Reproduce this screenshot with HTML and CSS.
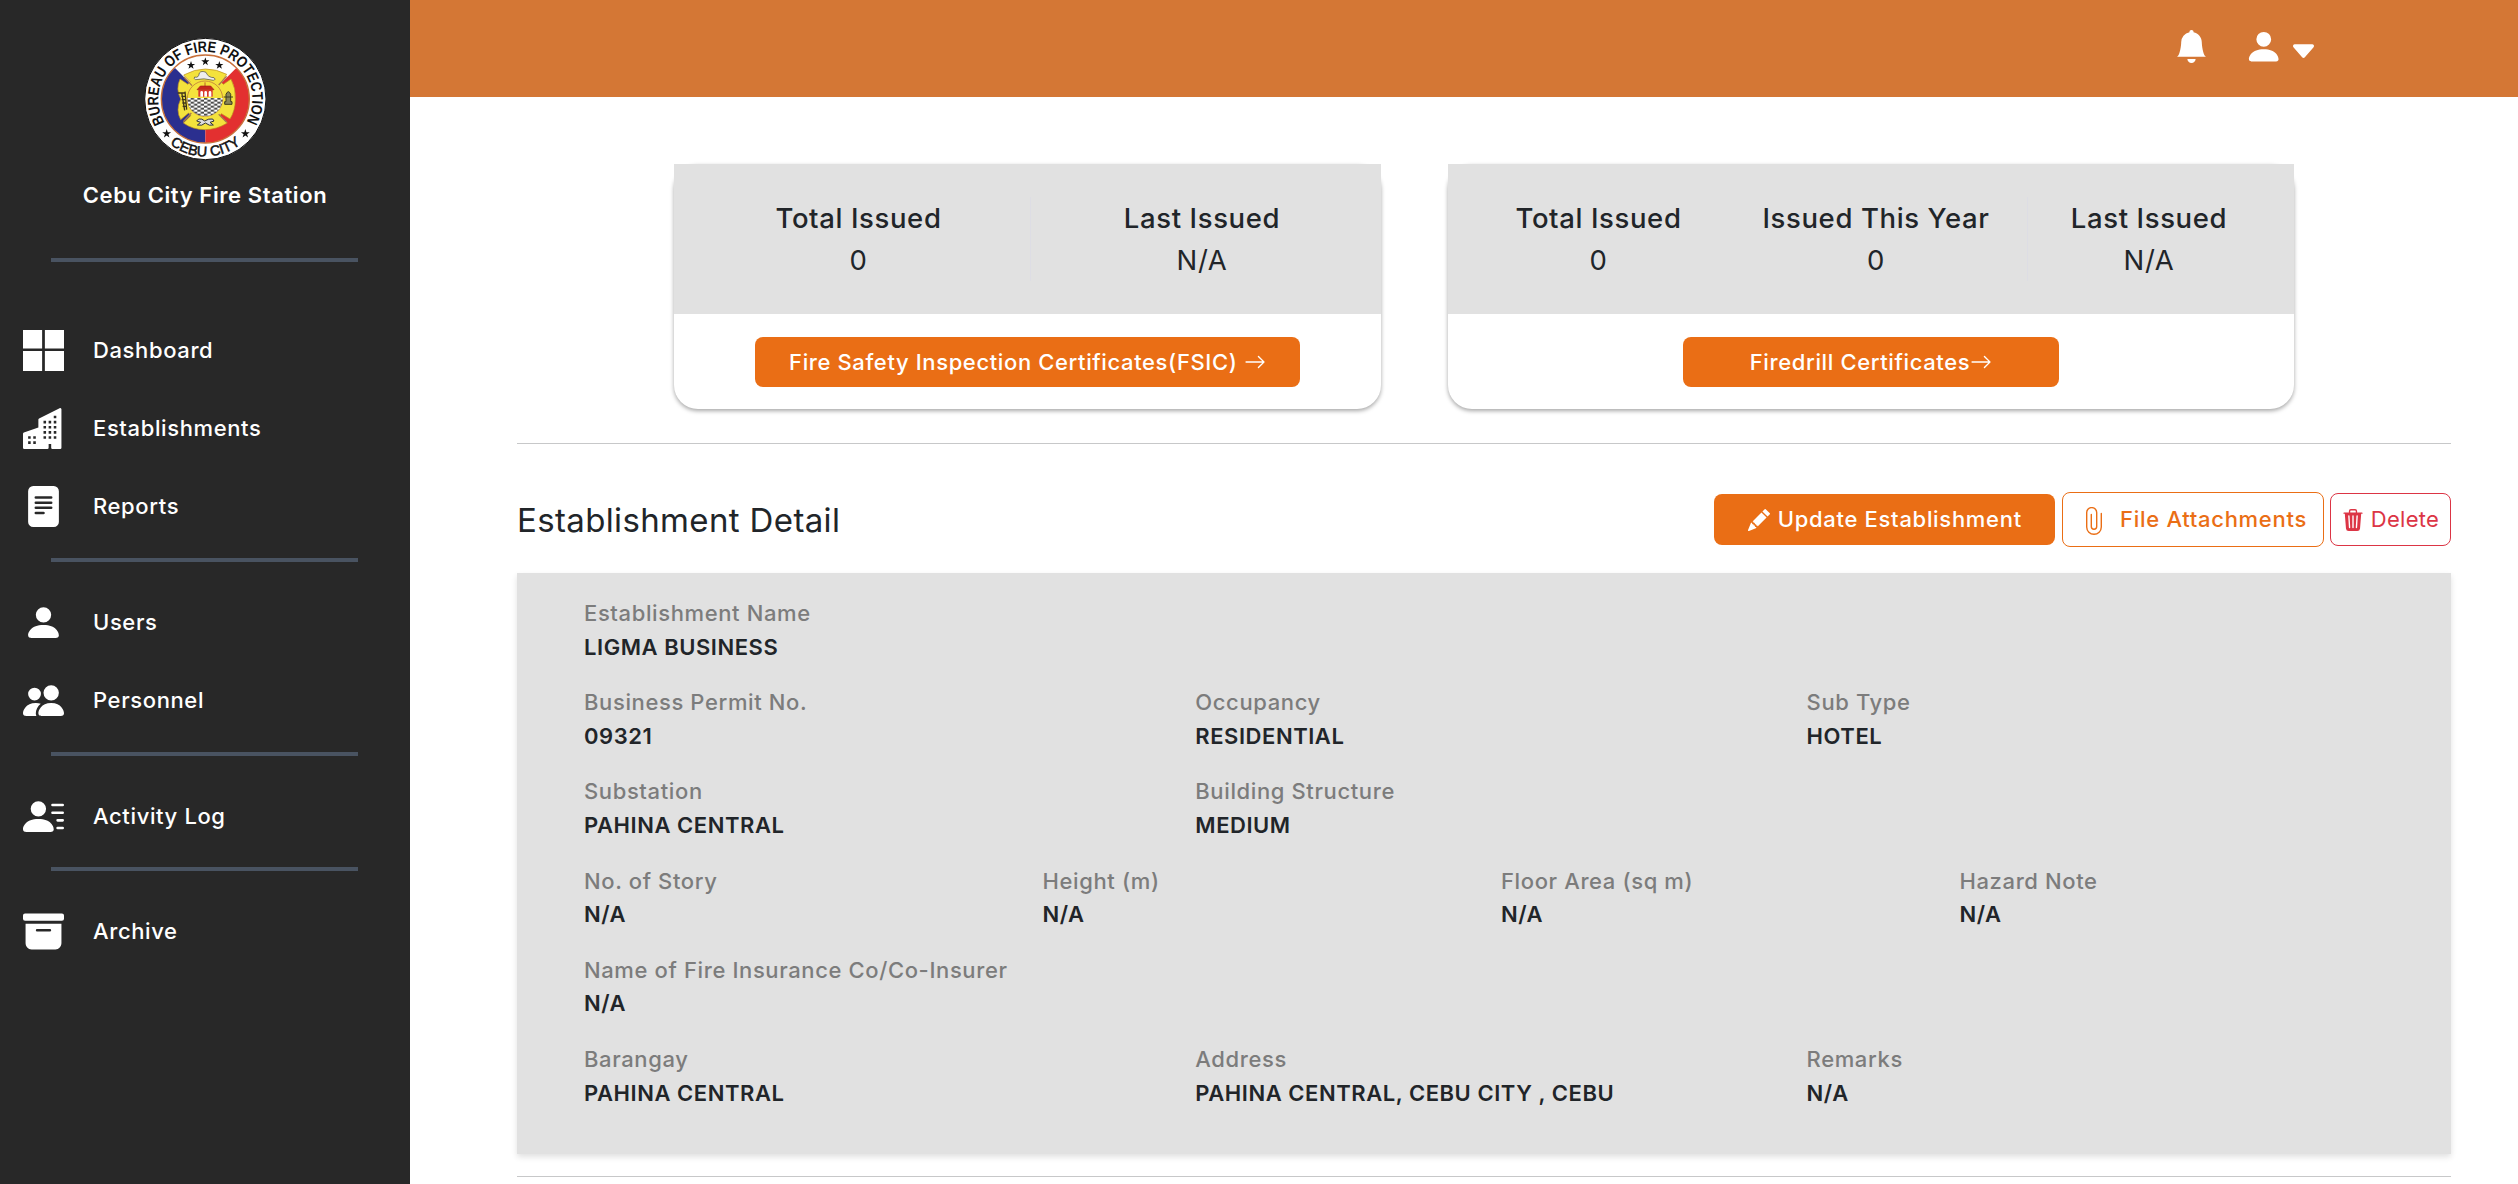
FILE: index.html
```html
<!DOCTYPE html>
<html lang="en">
<head>
<meta charset="utf-8">
<title>Establishment Detail</title>
<link rel="stylesheet" href="styles.css">
</head>
<body>
<svg class="defs" aria-hidden="true">
  <symbol id="i-grid" viewBox="0 0 16 16"><path d="M7.462 0H0v7.19h7.462zM16 0H8.538v7.19H16zM7.462 8.211H0V16h7.462zm8.538 0H8.538V16H16z"/></symbol>
  <symbol id="i-buildings" viewBox="0 0 16 16"><path d="M15 .5a.5.5 0 0 0-.724-.447l-8 4A.5.5 0 0 0 6 4.5v3.14L.342 9.526A.5.5 0 0 0 0 10v5.5a.5.5 0 0 0 .5.5h9a.5.5 0 0 0 .5-.5V14h1v1.5a.5.5 0 0 0 .5.5h3a.5.5 0 0 0 .5-.5zM2 11h1v1H2zm2 0h1v1H4zm-1 2v1H2v-1zm1 0h1v1H4zm9-10v1h-1V3zM8 5h1v1H8zm1 2v1H8V7zM8 9h1v1H8zm2 0h1v1h-1zm-1 2v1H8v-1zm1 0h1v1h-1zm3-2v1h-1V9zm-1 2h1v1h-1zm-2-4h1v1h-1zm3 0v1h-1V7zm-2-2v1h-1V5zm1 0h1v1h-1z"/></symbol>
  <symbol id="i-file" viewBox="0 0 16 16"><path d="M12 0H4a2 2 0 0 0-2 2v12a2 2 0 0 0 2 2h8a2 2 0 0 0 2-2V2a2 2 0 0 0-2-2M5 4h6a.5.5 0 0 1 0 1H5a.5.5 0 0 1 0-1m-.5 2.5A.5.5 0 0 1 5 6h6a.5.5 0 0 1 0 1H5a.5.5 0 0 1-.5-.5M5 8h6a.5.5 0 0 1 0 1H5a.5.5 0 0 1 0-1m0 2h3a.5.5 0 0 1 0 1H5a.5.5 0 0 1 0-1"/></symbol>
  <symbol id="i-person" viewBox="0 0 16 16"><path d="M3 14s-1 0-1-1 1-4 6-4 6 3 6 4-1 1-1 1zm5-6a3 3 0 1 0 0-6 3 3 0 0 0 0 6"/></symbol>
  <symbol id="i-people" viewBox="0 0 16 16"><path d="M7 14s-1 0-1-1 1-4 5-4 5 3 5 4-1 1-1 1zm4-6a3 3 0 1 0 0-6 3 3 0 0 0 0 6m-5.784 6A2.24 2.24 0 0 1 5 13c0-1.355.68-2.75 1.936-3.72A6.3 6.3 0 0 0 5 9c-4 0-5 3-5 4s1 1 1 1zM4.5 8a2.5 2.5 0 1 0 0-5 2.5 2.5 0 0 0 0 5"/></symbol>
  <symbol id="i-lines" viewBox="0 0 16 16"><path d="M6 8a3 3 0 1 0 0-6 3 3 0 0 0 0 6m-5 6s-1 0-1-1 1-4 6-4 6 3 6 4-1 1-1 1zM11 3.5a.5.5 0 0 1 .5-.5h4a.5.5 0 0 1 0 1h-4a.5.5 0 0 1-.5-.5m.5 2.5a.5.5 0 0 0 0 1h4a.5.5 0 0 0 0-1zm2 3a.5.5 0 0 0 0 1h2a.5.5 0 0 0 0-1zm0 3a.5.5 0 0 0 0 1h2a.5.5 0 0 0 0-1z"/></symbol>
  <symbol id="i-archive" viewBox="0 0 16 16"><path d="M12.643 15C13.979 15 15 13.845 15 12.5V5H1v7.5C1 13.845 2.021 15 3.357 15zM5.5 7h5a.5.5 0 0 1 0 1h-5a.5.5 0 0 1 0-1M.8 1a.8.8 0 0 0-.8.8V3a.8.8 0 0 0 .8.8h14.4A.8.8 0 0 0 16 3V1.8a.8.8 0 0 0-.8-.8z"/></symbol>
  <symbol id="i-bell" viewBox="0 0 16 16"><path d="M8 16a2 2 0 0 0 2-2H6a2 2 0 0 0 2 2m.995-14.901a1 1 0 1 0-1.99 0A5 5 0 0 0 3 6c0 1.098-.5 6-2 7h14c-1.5-1-2-5.902-2-7 0-2.42-1.72-4.44-4.005-4.901"/></symbol>
  <symbol id="i-caret" viewBox="0 0 16 16"><path d="M7.247 11.14 2.451 5.658C1.885 5.013 2.345 4 3.204 4h9.592a1 1 0 0 1 .753 1.659l-4.796 5.48a1 1 0 0 1-1.506 0z"/></symbol>
  <symbol id="i-arrow" viewBox="0 0 16 16"><path d="M1 8a.5.5 0 0 1 .5-.5h11.793l-3.147-3.146a.5.5 0 0 1 .708-.708l4 4a.5.5 0 0 1 0 .708l-4 4a.5.5 0 0 1-.708-.708L13.293 8.5H1.5A.5.5 0 0 1 1 8"/></symbol>
  <symbol id="i-pencil" viewBox="0 0 16 16"><path d="M12.854.146a.5.5 0 0 0-.707 0L10.5 1.793 14.207 5.5l1.647-1.646a.5.5 0 0 0 0-.708zm.646 6.061L9.793 2.5 3.293 9H3.5a.5.5 0 0 1 .5.5v.5h.5a.5.5 0 0 1 .5.5v.5h.5a.5.5 0 0 1 .5.5v.5h.5a.5.5 0 0 1 .5.5v.207zm-7.468 7.468A.5.5 0 0 1 6 13.5V13h-.5a.5.5 0 0 1-.5-.5V12h-.5a.5.5 0 0 1-.5-.5V11h-.5a.5.5 0 0 1-.5-.5V10h-.5a.5.5 0 0 1-.175-.032l-.179.178a.5.5 0 0 0-.11.168l-2 5a.5.5 0 0 0 .65.65l5-2a.5.5 0 0 0 .168-.11z"/></symbol>
  <symbol id="i-trash" viewBox="0 0 16 16"><path d="M11 1.5v1h3.5a.5.5 0 0 1 0 1h-.538l-.853 10.66A2 2 0 0 1 11.115 16h-6.23a2 2 0 0 1-1.994-1.84L2.038 3.5H1.5a.5.5 0 0 1 0-1H5v-1A1.5 1.5 0 0 1 6.5 0h3A1.5 1.5 0 0 1 11 1.5m-5 0v1h4v-1a.5.5 0 0 0-.5-.5h-3a.5.5 0 0 0-.5.5M4.5 5.029l.5 8.5a.5.5 0 1 0 .998-.06l-.5-8.5a.5.5 0 1 0-.998.06m6.53-.528a.5.5 0 0 0-.528.47l-.5 8.5a.5.5 0 0 0 .998.058l.5-8.5a.5.5 0 0 0-.47-.528M8 4.5a.5.5 0 0 0-.5.5v8.5a.5.5 0 0 0 1 0V5a.5.5 0 0 0-.5-.5"/></symbol>
  <symbol id="i-star" viewBox="-10 -10 20 20"><path d="M0-10 2.3-3.2 9.5-3.1 3.7 1.2 5.9 8.1 0 3.9-5.9 8.1-3.7 1.2-9.5-3.1-2.3-3.2z"/></symbol>
</svg>
<div class="app">
  <aside class="sidebar">
    <svg class="logo" viewBox="40 52 368 372">
      <defs>
        <path id="arcTop" d="M101.900 308.500A141 141 0 1 1 346.100 308.500"/>
        <path id="arcBottom" d="M96 353A172 172 0 0 0 352 353"/>
        <clipPath id="disc"><circle cx="224" cy="238" r="132"/></clipPath>
        <clipPath id="sea"><circle cx="223" cy="237" r="53"/></clipPath>
        <pattern id="waves" width="20" height="12" patternUnits="userSpaceOnUse" y="234">
          <rect width="20" height="12" fill="#fff"/><path d="M0 1h10v4H0zM10 7h10v4H10z" fill="#111"/>
        </pattern>
      </defs>
      <circle cx="224" cy="238" r="182" fill="#fff" stroke="#111" stroke-width="3"/>
      <g clip-path="url(#disc)">
        <path d="M224 238 134 146 80 150V380H224z" fill="#2b2f8f"/>
        <path d="M224 238 316 146 380 150V380H224z" fill="#e33030"/>
      </g>
      <circle cx="224" cy="238" r="132" fill="none" stroke="#c8703a" stroke-width="4"/>
      <path d="M159 166Q192 148 224 148Q258 148 288 164L272 188L278 194L301 178Q316 206 314 240Q314 272 298 298L272 282L268 288L290 310Q258 330 222 330Q186 330 158 310L180 288L174 280L150 300Q134 272 150 238Q134 208 148 178L172 194L178 186Z" fill="#f4e23c" stroke="#b98a20" stroke-width="2"/>
      <path d="M160 172 184 198M288 170 264 196M158 306 182 280M288 308 264 284" stroke="#a9794c" stroke-width="4"/>
      <circle cx="223" cy="237" r="53" fill="#f4e23c" stroke="#b5643a" stroke-width="2"/>
      <rect x="168" y="235" width="110" height="58" fill="url(#waves)" clip-path="url(#sea)"/>
      <path d="M199 210 209 199H240L250 210zM223 188V200" fill="#c5281c" stroke="#a02018" stroke-width="2"/>
      <path d="M203 210H246V231H203z" fill="#d8392b"/>
      <path d="M209 231V218a4 4 0 0 1 8 0V231zM221 231V218a4 4 0 0 1 8 0V231zM234 231V218a4 4 0 0 1 8 0V231z" fill="#fff"/>
      <path d="M192 172Q204 176 206 160Q212 152 226 158Q232 174 250 174Q258 180 248 182Q220 174 194 180Q188 176 192 172z" fill="#eee" stroke="#444" stroke-width="2"/>
      <path d="M153 218 162 272M163 216 168 270M141 220H165M152 230H165M153 240H166M155 250H166M156 260H168" fill="none" stroke="#40361a" stroke-width="4"/>
      <path d="M286 224Q293 208 300 224V246H304V254H282V246H286zM279 232H307" fill="#8a8658" stroke="#3e3a20" stroke-width="3"/>
      <path d="M204 298Q214 296 222 304Q234 296 246 298L250 304 238 308 248 316Q236 320 224 310Q214 320 200 316L210 308 198 304z" fill="#ddd" stroke="#333" stroke-width="3"/>
      <g class="stars">
        <use href="#i-star" x="168" y="124" width="26" height="26"/><use href="#i-star" x="211" y="113" width="26" height="26"/><use href="#i-star" x="253" y="124" width="26" height="26"/>
        <use href="#i-star" x="94" y="328" width="28" height="28"/><use href="#i-star" x="330" y="328" width="28" height="28"/>
      </g>
      <text class="seal"><textPath href="#arcTop" textLength="588" lengthAdjust="spacingAndGlyphs">BUREAU OF FIRE PROTECTION</textPath></text>
      <text class="seal city"><textPath href="#arcBottom" startOffset="50%" text-anchor="middle">CEBU CITY</textPath></text>
    </svg>
    <div class="station">Cebu City Fire Station</div>
    <hr class="first">
    <nav>
      <a><svg><use href="#i-grid"/></svg>Dashboard</a>
      <a><svg><use href="#i-buildings"/></svg>Establishments</a>
      <a><svg><use href="#i-file"/></svg>Reports</a>
      <hr>
      <a><svg><use href="#i-person"/></svg>Users</a>
      <a><svg><use href="#i-people"/></svg>Personnel</a>
      <hr>
      <a><svg><use href="#i-lines"/></svg>Activity Log</a>
      <hr class="tight">
      <a><svg><use href="#i-archive"/></svg>Archive</a>
    </nav>
  </aside>
  <div class="page">
    <header class="topbar">
      <svg class="bell"><use href="#i-bell"/></svg>
      <svg class="user"><use href="#i-person"/></svg>
      <svg class="caret"><use href="#i-caret"/></svg>
    </header>
    <main>
      <section class="cards">
        <div class="card fsic">
          <div class="stats">
            <div><b>Total Issued</b><span>0</span></div>
            <div class="divided"><b>Last Issued</b><span>N/A</span></div>
          </div>
          <div class="action"><button class="solid">Fire Safety Inspection Certificates(FSIC)<svg class="gap"><use href="#i-arrow"/></svg></button></div>
        </div>
        <div class="card drill">
          <div class="stats">
            <div><b>Total Issued</b><span>0</span></div>
            <div><b>Issued This Year</b><span>0</span></div>
            <div class="divided"><b>Last Issued</b><span>N/A</span></div>
          </div>
          <div class="action"><button class="solid">Firedrill Certificates<svg><use href="#i-arrow"/></svg></button></div>
        </div>
      </section>
      <hr class="rule">
      <div class="heading">
        <h1>Establishment Detail</h1>
        <button class="solid update"><svg><use href="#i-pencil"/></svg>Update Establishment</button>
        <button class="outline files"><svg viewBox="0 0 16 28"><path d="M15.300 6.500V20A7.300 7.300 0 0 1 .7 20V5.600A5 5 0 0 1 10.700 5.600V19.500A2.700 2.700 0 0 1 5.300 19.500V7.500"/></svg>File Attachments</button>
        <button class="outline delete"><svg><use href="#i-trash"/></svg>Delete</button>
      </div>
      <section class="panel">
        <div class="row thirds"><div><label>Establishment Name</label><p>LIGMA BUSINESS</p></div></div>
        <div class="row thirds"><div><label>Business Permit No.</label><p>09321</p></div><div><label>Occupancy</label><p>RESIDENTIAL</p></div><div><label>Sub Type</label><p>HOTEL</p></div></div>
        <div class="row thirds"><div><label>Substation</label><p>PAHINA CENTRAL</p></div><div><label>Building Structure</label><p>MEDIUM</p></div></div>
        <div class="row quarters"><div><label>No. of Story</label><p>N/A</p></div><div><label>Height (m)</label><p>N/A</p></div><div><label>Floor Area (sq m)</label><p>N/A</p></div><div><label>Hazard Note</label><p>N/A</p></div></div>
        <div class="row thirds"><div><label>Name of Fire Insurance Co/Co-Insurer</label><p>N/A</p></div></div>
        <div class="row thirds"><div><label>Barangay</label><p>PAHINA CENTRAL</p></div><div><label>Address</label><p>PAHINA CENTRAL, CEBU CITY , CEBU</p></div><div><label>Remarks</label><p>N/A</p></div></div>
      </section>
      <hr class="rule last">
    </main>
  </div>
</div>
</body>
</html>
```
FILE: styles.css
```css
* { box-sizing: border-box; }
body {
  margin: 0;
  background: #fff;
  color: #212529;
  font: 500 22px/33px Inter, "Liberation Sans", sans-serif;
  letter-spacing: .620px;
  overflow: hidden;
}
svg { fill: currentColor; flex: none; display: block; }
.defs { position: absolute; width: 0; height: 0; }
hr, p, h1 { margin: 0; }
hr { border: 0; }
.app { display: flex; height: 1184px; }

.sidebar { width: 410px; flex: none; background: #282828; color: #fff; padding-top: 37px; }
.logo { width: 122.700px; height: 124px; margin: 0 auto; }
.seal { font: bold 46px "Liberation Sans", sans-serif; fill: #111; letter-spacing: 0; }
.city { font-size: 43px; font-weight: 400; stroke: #111; stroke-width: 1.500; }
.stars { fill: #111; }
.station { text-align: center; margin-top: 18px; font-weight: 600; letter-spacing: .600px; }
.sidebar hr { height: 4px; margin: 13px 52px 21px 51px; background: #495361; }
.sidebar hr.first { margin: 46px 52px 49px 51px; }
.sidebar hr.tight { margin-top: 12px; }
nav a { display: flex; align-items: center; height: 78px; padding-left: 23px; }
nav a svg { width: 41px; height: 41px; margin-right: 29px; }

.page { flex: 1; min-width: 0; }
.topbar { height: 97px; background: #d47735; color: #fff; display: flex; justify-content: flex-end; padding-right: 200px; }
.bell { width: 33px; height: 33px; margin: 30px 36px 0 0; }
.user { width: 39.500px; height: 39.500px; margin: 26.500px 6px 0 0; }
.caret { width: 29px; height: 29px; margin-top: 36.500px; }

main { padding: 67px 67px 0 107px; }
.cards { display: flex; gap: 67px; padding-left: 157px; }
.card { height: 245px; border-radius: 24px; box-shadow: 0 2px 4px rgba(0, 0, 0, .35); }
.fsic { width: 707px; }
.drill { width: 846px; }
.stats { height: 150px; background: #e1e1e1; display: grid; align-content: center; font-size: 27.500px; line-height: 42px; text-align: center; }
.fsic .stats { grid-template-columns: 345px 342px; padding-left: 12px; }
.drill .stats { grid-template-columns: 251px 304px 242px; padding-left: 25px; }
.stats b, .stats span { display: block; font-weight: 500; }
.stats span { font-weight: 400; }
.divided { box-shadow: -1px 0 #dddde4; }
.action { height: 95px; display: flex; justify-content: center; padding-top: 23px; }
button { display: flex; align-items: center; justify-content: center; padding: 0; border: 0; border-radius: 8px; font: inherit; letter-spacing: inherit; white-space: nowrap; background: none; }
.solid { background: #ea6e15; color: #fff; height: 50px; }
.solid svg { width: 22px; height: 22px; }
.fsic .solid { width: 545px; }
.drill .solid { width: 376px; }
.gap { margin-left: 6.500px; }

.rule { height: 1px; background: #c7c8c9; margin-top: 34px; }
.rule.last { margin-top: 22px; }
.heading { display: flex; align-items: center; height: 55px; margin: 48px 0 26px; }
h1 { flex: 1; font-weight: 400; font-size: 33px; line-height: 40px; letter-spacing: .360px; }
.update, .files { letter-spacing: .700px; }
.solid.update { width: 341px; height: 51px; margin-right: 7px; padding-left: 1px; }
.update svg { margin-right: 7.500px; }
.outline { border: 1px solid; }
.files { width: 262px; height: 55px; margin-right: 6px; color: #ea6e15; padding: 0 0 1px 7px; }
.files svg { width: 16px; height: 28px; margin: 4px 18px 0 0; fill: none; stroke: currentColor; stroke-width: 1.400; stroke-linecap: round; }
.delete { width: 121px; height: 53px; color: #dc3545; font-weight: 400; letter-spacing: .300px; }
.delete svg { width: 22px; height: 22px; margin-right: 7px; }

.panel { height: 581px; background: #e1e1e1; padding: 24px 33px 0 67px; display: flex; flex-direction: column; gap: 23.240px; box-shadow: 0 3px 6px rgba(0, 0, 0, .12); }
.row { display: grid; height: 66px; }
.thirds { grid-template-columns: repeat(3, 611.300px); }
.quarters { grid-template-columns: repeat(4, 458.500px); }
.row label { display: block; color: #7c7c7c; white-space: nowrap; }
.row p { font-weight: 600; white-space: nowrap; letter-spacing: .550px; padding-top: .5px; }
```
